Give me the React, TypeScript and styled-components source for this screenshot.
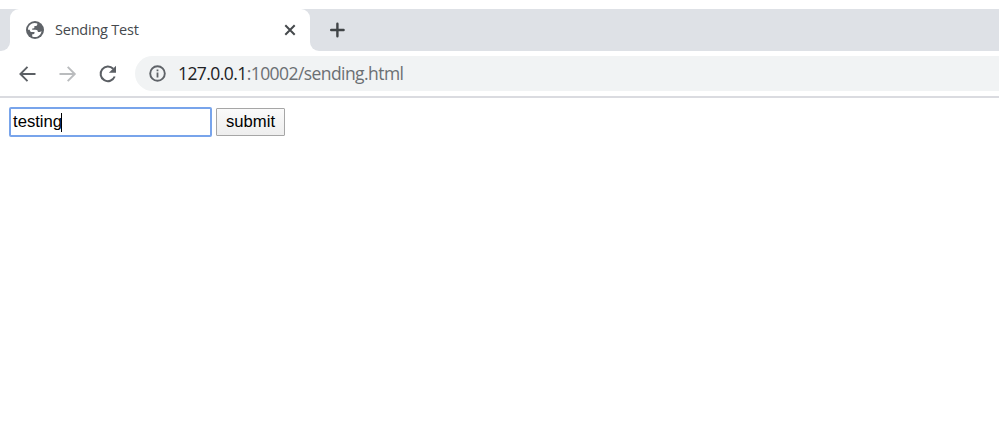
import React from "react";
import styled, { createGlobalStyle } from "styled-components";

const GlobalStyle = createGlobalStyle`
  *, *::before, *::after { box-sizing: border-box; }
  body { margin: 0; background: #fff; overflow: hidden; }
`;

const Browser = styled.div`
  height: 427px;
  padding-top: 9px;
  display: flex;
  flex-direction: column;
  background: #fff;
  font-family: "Open Sans", "Noto Sans", sans-serif;
`;

const TabStrip = styled.div`
  height: 42px;
  display: flex;
  background: linear-gradient(#dee1e6 0 20px, #fff 20px);
`;

const StripEdge = styled.div`
  width: 10px;
  background: #dee1e6;
  border-bottom-right-radius: 9px;
`;

const Tab = styled.div`
  width: 300px;
  display: flex;
  align-items: center;
  padding: 0 12px 0 16px;
  background: #fff;
  border-radius: 9px 9px 0 0;
`;

const TabTitle = styled.span`
  flex: 1;
  margin-left: 11px;
  font-size: 14.5px;
  line-height: 20px;
  letter-spacing: -0.22px;
  color: #45494d;
`;

const StripRest = styled.div`
  flex: 1;
  display: flex;
  align-items: center;
  padding-left: 19px;
  background: #dee1e6;
  border-bottom-left-radius: 9px;
`;

const Toolbar = styled.div`
  height: 47px;
  display: flex;
  align-items: center;
  padding-left: 18px;
  border-bottom: 2px solid #dadbe0;
`;

const NavButtons = styled.div`
  width: 117px;
  display: flex;
  gap: 20px;
`;

const AddressBar = styled.div`
  flex: 1;
  height: 35px;
  display: flex;
  align-items: center;
  padding-left: 14px;
  background: #f1f3f4;
  border-radius: 17.5px 0 0 17.5px;
`;

const Address = styled.span`
  margin-left: 12px;
  padding-bottom: 2px;
  font-size: 17.5px;
  line-height: 24px;
  letter-spacing: -0.57px;
  color: #6b6f73;
  white-space: nowrap;
`;

const Host = styled.span`
  color: #202124;
`;

const Page = styled.main`
  display: flex;
  gap: 4px;
  padding: 9px;
  font: 16.67px/20px "Liberation Sans", Arial, sans-serif;
  color: #000;
`;

const TextField = styled.div`
  width: 203px;
  height: 30px;
  display: flex;
  align-items: center;
  padding: 0 0 0 2px;
  border: 2px solid #78a4eb;
  border-radius: 2px;
`;

const Caret = styled.span`
  width: 1px;
  height: 19px;
  margin-left: -1px;
  background: #000;
`;

const Submit = styled.button`
  width: 69px;
  height: 28px;
  margin-top: 1px;
  padding: 0 0 1px;
  border: 1px solid #a6a6a6;
  border-radius: 1px;
  background: linear-gradient(#fafafa, #eeeeee);
  font: inherit;
  color: #000;
`;

const GlobeIcon = () => (
  <svg width="18" height="18" viewBox="0 0 18 18">
    <circle cx="9" cy="9" r="9" fill="#5f6368" />
    <path
      d="M2 8.7C2 5 5 2.1 8.6 2C9.8 2 10.6 2.2 11.3 2.5V3.2C11.3 4.2 10.5 5 9.5 5H8.4V6.3C8.4 7 7.9 7.5 7.2 7.5H6.2V8.8H9.4C11 8.8 11.9 9.6 11.9 11.1H13.1C14.1 11.1 14.8 10.6 15.5 9.9C15.2 13.3 12.4 16 9 16C8 16 7 15.8 6.2 15.4V13.2H7.3C8 13.2 8.5 12.7 8.5 12V11.1H6.3C4.6 11.1 3.8 9.9 3.8 8.7Z"
      fill="#fff"
    />
  </svg>
);

const CloseIcon = () => (
  <svg width="16" height="16" viewBox="0 0 16 16" fill="none" stroke="#45494c" strokeWidth="2">
    <path d="M3.3 3.3L12.7 12.7M12.7 3.3L3.3 12.7" />
  </svg>
);

const PlusIcon = () => (
  <svg width="16" height="16" viewBox="0 0 16 16" fill="none" stroke="#404447" strokeWidth="2.4" strokeLinecap="round">
    <path d="M8.4 1.8V14.2M2.2 8H14.6" />
  </svg>
);

const Arrow = ({ forward = false }: { forward?: boolean }) => (
  <svg width="20" height="20" viewBox="0 0 20 20" fill="none" stroke={forward ? "#babcbe" : "#5b5f64"} strokeWidth="1.9">
    <path d={forward ? "M1.5 10H16.8M9.7 2.9L16.8 10L9.7 17.1" : "M17.5 10H2.8M9.5 2.9L2.4 10L9.5 17.1"} />
  </svg>
);

const ReloadIcon = () => (
  <svg width="20" height="20" viewBox="0 0 20 20">
    <path d="M15.2 4.8A7.3 7.3 0 1 0 16.7 12.5" fill="none" stroke="#5b5f64" strokeWidth="2" />
    <path d="M18 1.7V8.8H10.9Z" fill="#5b5f64" />
  </svg>
);

const InfoIcon = () => (
  <svg width="17" height="17" viewBox="0 0 17 17">
    <circle cx="8.5" cy="8.5" r="7.3" fill="none" stroke="#5f6368" strokeWidth="1.9" />
    <path d="M8.5 7.5V12.6M8.5 4.4V6.2" stroke="#5f6368" strokeWidth="1.8" />
  </svg>
);

export default function App() {
  return (
    <Browser>
      <GlobalStyle />
      <TabStrip>
        <StripEdge />
        <Tab>
          <GlobeIcon />
          <TabTitle>Sending Test</TabTitle>
          <CloseIcon />
        </Tab>
        <StripRest>
          <PlusIcon />
        </StripRest>
      </TabStrip>
      <Toolbar>
        <NavButtons>
          <Arrow />
          <Arrow forward />
          <ReloadIcon />
        </NavButtons>
        <AddressBar>
          <InfoIcon />
          <Address>
            <Host>127.0.0.1</Host>:10002/sending.html
          </Address>
        </AddressBar>
      </Toolbar>
      <Page>
        <TextField>
          testing
          <Caret />
        </TextField>
        <Submit type="button">submit</Submit>
      </Page>
    </Browser>
  );
}
